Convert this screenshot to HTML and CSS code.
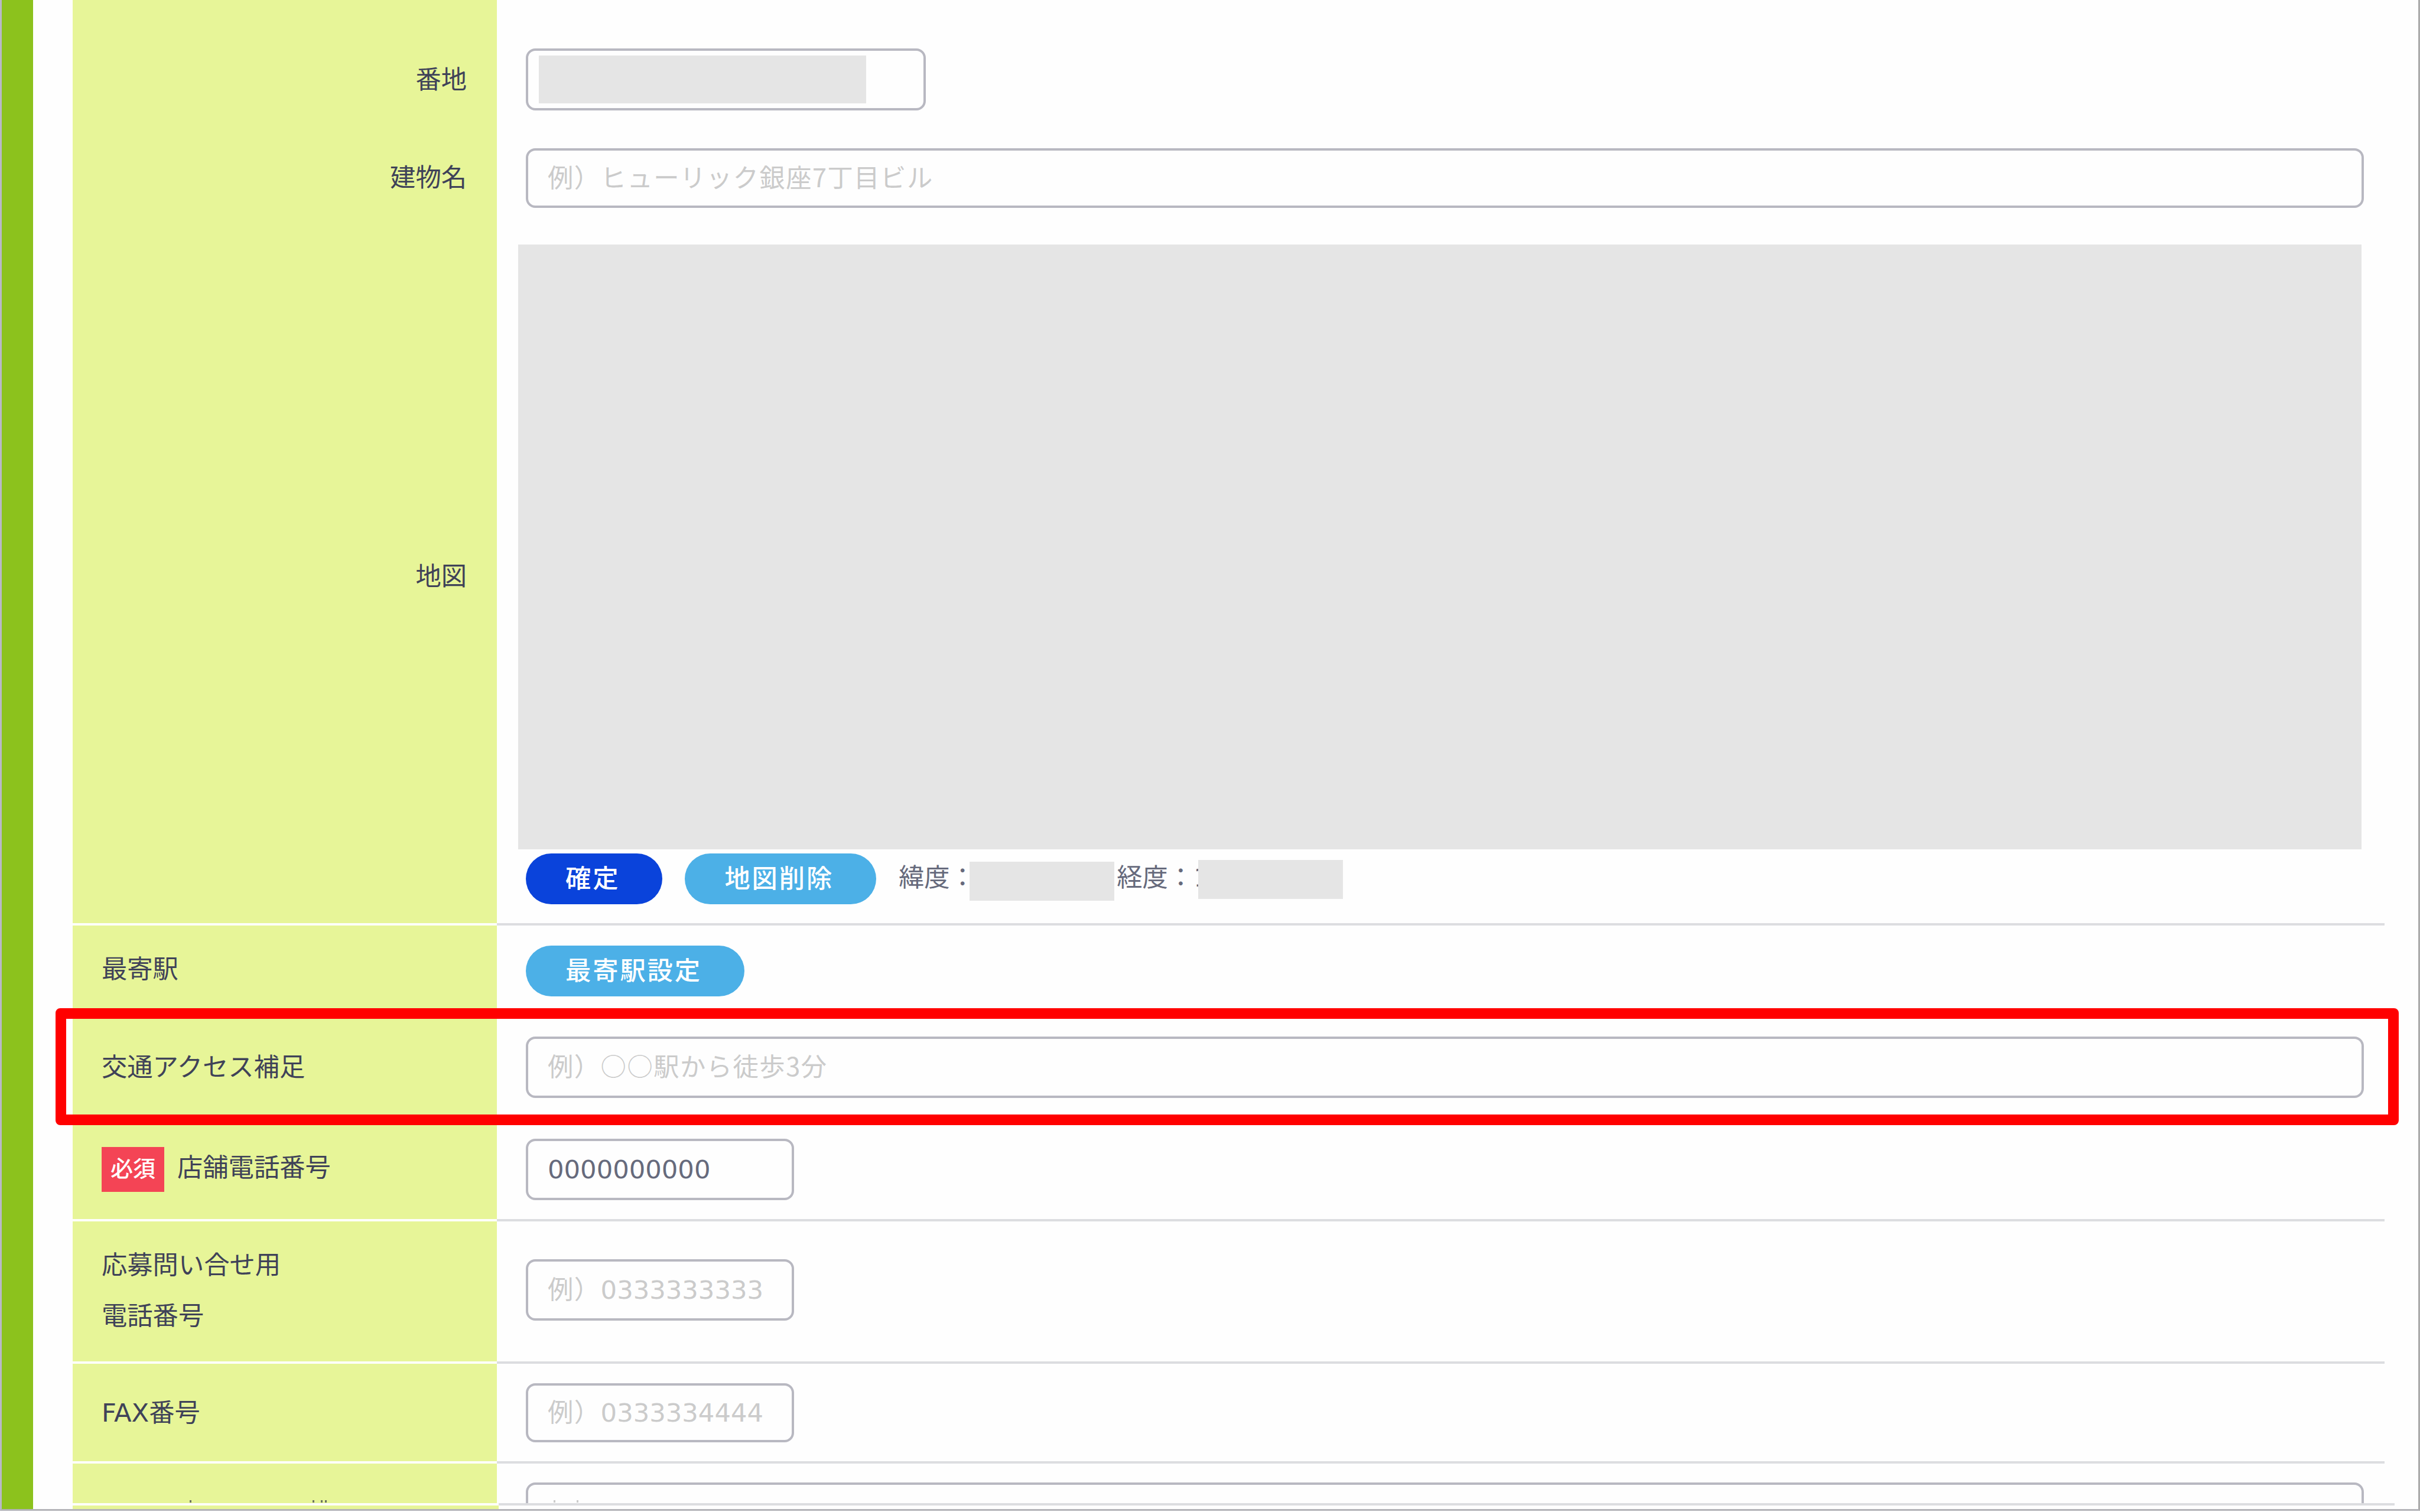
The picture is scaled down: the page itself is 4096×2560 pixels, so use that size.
FILE: index.html
```html
<!DOCTYPE html>
<html lang="ja">
<head>
    <meta charset="UTF-8" />
    <meta name="viewport" content="width=device-width, initial-scale=1.0" />
    <title>店舗情報</title>
    <link rel="stylesheet" href="styles.css">
</head>
<body>

    <div class="page">
        <div class="side-bar"></div>

        <div class="form">
            <div class="group">
                <div class="row row-street">
                    <div class="label label-right">番地</div>
                    <div class="value">
                        <div class="input input-street"><span class="mask mask-street"></span></div>
                    </div>
                </div>
                <div class="row row-building">
                    <div class="label label-right">建物名</div>
                    <div class="value">
                        <div class="input input-building placeholder">
                            <div>例）ヒューリック銀座<span class="wide">7</span>丁目ビル</div>
                        </div>
                    </div>
                </div>
                <div class="row row-map">
                    <div class="label label-right">地図</div>
                    <div class="value value-map">
                        <div class="map"></div>
                        <div class="map-tools">
                            <button type="button" class="btn btn-primary">確定</button>
                            <button type="button" class="btn">地図削除</button>
                            <div class="coords">
                                <span class="lat">緯度：</span><span class="mask mask-lat"></span>
                                <span class="lng">経度：</span><span class="lng-value">1</span><span class="mask mask-lng"></span>
                            </div>
                        </div>
                    </div>
                </div>
            </div>

            <div class="row row-station">
                <div class="label">最寄駅</div>
                <div class="value"><button type="button" class="btn">最寄駅設定</button></div>
            </div>

            <div class="row row-access">
                <div class="label">交通アクセス補足</div>
                <div class="value">
                    <div class="input placeholder">
                        <div>例）<span class="wide">○○</span>駅から徒歩<span class="wide">3</span>分</div>
                    </div>
                </div>
            </div>

            <div class="row row-tel">
                <div class="label"><span class="required">必須</span>店舗電話番号</div>
                <div class="value">
                    <div class="input input-tel">0000000000</div>
                </div>
            </div>

            <div class="row row-contact">
                <div class="label">応募問い合せ用<br>電話番号</div>
                <div class="value">
                    <div class="input input-tel placeholder"><span class="example">例）</span>0333333333</div>
                </div>
            </div>

            <div class="row row-fax">
                <div class="label">FAX番号</div>
                <div class="value">
                    <div class="input input-tel input-low placeholder"><span class="example">例）</span>0333334444</div>
                </div>
            </div>

            <!-- row cut off by the bottom edge -->
            <div class="row row-cut">
                <div class="label">
                    <i class="tick tick-a"></i><i class="tick tick-b"></i><i class="tick tick-c"></i><i class="tick"></i>
                </div>
                <div class="value">
                    <div class="input placeholder">
                        <i class="tick tick-d"></i><i class="tick tick-e"></i>
                    </div>
                </div>
            </div>
            <div class="row row-last">
                <div class="label"></div>
                <div class="value"></div>
            </div>
        </div>

        <div class="highlight"></div>
    </div>

</body>
</html>
```
FILE: styles.css
```css
* {
    box-sizing: border-box;
}
body {
    margin: 0;
    background: #fefefe;
    color: #3f4258;
    font-family: "DejaVu Sans", "Noto Sans CJK JP", sans-serif;
    font-size: 43.3px;
    line-height: 86px;
}
.page {
    position: relative;
    display: flex;
    width: 4096px;
    height: 2558px;
    overflow: hidden;
    border-left: 3px solid #b9b8c6;
    border-right: 3px solid #ababab;
    border-bottom: 3px solid #b3b3b8;
}
.side-bar {
    width: 53px;
    background: #8cc21d;
}
.form {
    width: 3930px;
    margin-left: 67px;
}

/* rows */
.group {
    width: 3913px;
    height: 1567px;
}
.row {
    display: flex;
    width: 3913px;
}
.label {
    display: flex;
    align-items: center;
    width: 718px;
    padding: 0 51px 0 49px;
    background: #e7f598;
    border-bottom: 4px solid #fefefe;
    white-space: nowrap;
}
.label-right {
    justify-content: flex-end;
}
.value {
    display: flex;
    flex: 1;
    align-items: center;
    padding-left: 49px;
    padding-right: 35px;
    border-bottom: 4px solid #dcdde0;
}
.row-street .label,
.row-street .value,
.row-building .label,
.row-building .value {
    border-bottom: none;
}
.row-street {
    height: 187px;
}
.row-street .label,
.row-street .value {
    padding-top: 82px;
}
.row-building {
    height: 165px;
}
.row-building .value {
    padding-top: 64px;
}
.row-building .label {
    padding-top: 62px;
}
.row-map {
    height: 1215px;
}
.row-map .label {
    padding-top: 37px;
}
.value-map {
    display: block;
    padding: 62px 0 0 36px;
}
.row-station {
    height: 149px;
}
.row-station .label {
    padding-top: 3px;
}
.row-station .value {
    padding-top: 8px;
}
.row-access {
    height: 180px;
}
.row-access .label,
.row-access .value {
    padding-top: 6px;
}
.row-tel {
    height: 172px;
}
.row-tel .label {
    padding-bottom: 7px;
}
.row-contact {
    height: 241px;
}
.row-contact .label {
    padding-bottom: 4px;
}
.row-contact .value {
    padding-bottom: 6px;
}
.row-fax {
    height: 169px;
}

/* fields */
.input {
    display: flex;
    align-items: center;
    width: 100%;
    height: 104px;
    padding-left: 33px;
    background: #fefefe;
    border: 4px solid #b8b8c1;
    border-radius: 16px;
    color: #666a7c;
    white-space: nowrap;
}
.placeholder {
    color: #cbcbcb;
    letter-spacing: 1.5px;
}
.wide {
    font-family: "Noto Sans CJK JP", sans-serif;
    line-height: 1;
}
.input-street {
    width: 677px;
    height: 105px;
    padding-left: 18px;
}
.input-building {
    height: 101px;
}
.input-tel {
    width: 454px;
    letter-spacing: 0;
}
.input-low {
    height: 100px;
}
.example {
    letter-spacing: 1.5px;
}
.mask {
    background: #e5e5e5;
}
.mask-street {
    width: 554px;
    height: 81px;
}

/* map */
.map {
    width: 3120px;
    height: 1024px;
    background: #e5e5e5;
}
.map-tools {
    display: flex;
    padding: 7px 0 0 13px;
}
.btn {
    height: 86px;
    margin: 0 38px 0 0;
    padding: 0 72px 0 67px;
    border: none;
    border-radius: 43px;
    background: #4cb0e7;
    color: #fff;
    font-family: inherit;
    font-size: 43.3px;
    font-weight: 500;
    line-height: 86px;
    letter-spacing: 2.9px;
    white-space: nowrap;
}
.btn-primary {
    background: #0a43db;
}
.coords {
    display: flex;
    align-items: flex-start;
    height: 82px;
    color: #666a7c;
    line-height: 82px;
    white-space: nowrap;
}
.lat {
    width: 120px;
    letter-spacing: -0.2px;
}
.mask-lat {
    width: 245px;
    height: 66px;
    margin-top: 14px;
}
.lng {
    width: 134px;
    margin-left: 4px;
}
.lng-value {
    width: 4px;
    overflow: hidden;
    text-indent: -4px;
}
.mask-lng {
    width: 245px;
    height: 66px;
    margin-top: 11px;
}

.required {
    width: 106px;
    height: 76px;
    margin-right: 22px;
    margin-top: 6px;
    background: #f44455;
    color: #fff;
    font-size: 38px;
    font-weight: 500;
    line-height: 75px;
    text-align: center;
}

/* bottom edge */
.row-cut {
    height: 67px;
    overflow: hidden;
}
.row-cut .label,
.row-cut .value,
.row-cut .input {
    align-items: flex-start;
}
.row-cut .label,
.row-cut .value {
    border-bottom: none;
}
.row-cut .value {
    padding-top: 32px;
}
.tick {
    width: 3px;
    height: 4px;
    margin-top: 62px;
    background: #6c7460;
}
.tick-a {
    margin-left: 149px;
    margin-right: 205px;
}
.tick-b {
    margin-right: 11px;
}
.tick-c {
    margin-right: 4px;
}
.tick-d,
.tick-e {
    margin-top: 26px;
    margin-left: 10px;
    background: #cbcbcb;
}
.tick-e {
    margin-left: 36px;
}
.row-last {
    width: 3930px;
    height: 10px;
}
.row-last .label {
    width: 721px;
    border-top: 4px solid #fefefe;
    border-bottom: none;
}
.row-last .value {
    border-top: 4px solid #dcdde0;
    border-bottom: none;
}

/* red frame round the access row */
.highlight {
    position: absolute;
    left: 91px;
    top: 1707px;
    width: 3966px;
    height: 198px;
    border: 18px solid #ff0000;
    border-radius: 8px;
}
```
